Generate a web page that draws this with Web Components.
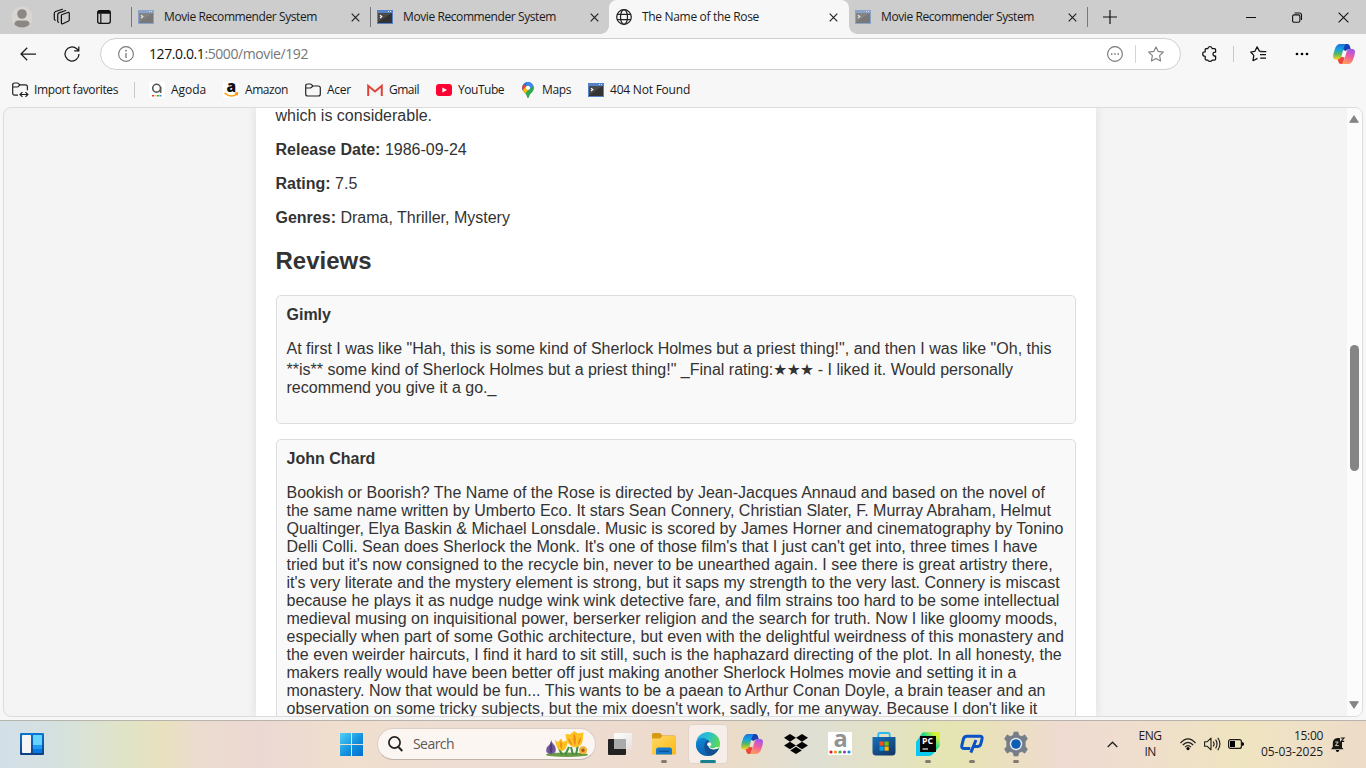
<!DOCTYPE html>
<html lang="en">
<head>
<meta charset="utf-8">
<title>The Name of the Rose</title>
<style>
html,body{margin:0;height:100%;overflow:hidden}
body{width:1366px;height:768px;background:#f7f7f7}
</style>
</head>
<body>
<desktop-screen></desktop-screen>
<script>
const icons = {
avatar:[22,22,'<circle cx="11" cy="11" r="10.6" fill="#d9d5d0"/><circle cx="11" cy="8" r="4.8" fill="#8b8784"/><path d="M3.4 18.3C3.4 15.6 5.2 14.4 7 14.4h8c1.8 0 3.6 1.2 3.6 3.9A10.6 10.6 0 0 1 3.4 18.3z" fill="#8b8784"/>'],
spaces:[18,18,'<g fill="none" stroke="#111" stroke-width="1.2" stroke-linejoin="round" stroke-linecap="round"><path d="M8.6 6.8 14.8 4.5Q16.3 4 16.3 5.6V11.6Q16.3 12.9 15.2 13.3L9.8 15.8Q8.4 16.3 8.4 14.9V7.6Q8.4 7 8.6 6.8z"/><path d="M5.4 14.3Q4.7 14 4.7 13V6.8Q4.7 5.5 6 4.9L12.6 2.5"/><path d="M2.2 12.3Q1.3 11.9 1.3 10.8V5.3Q1.3 4 2.6 3.5L9.4 1.2"/></g>'],
tabact:[16,16,'<rect x="1.7" y="1.7" width="12.6" height="12.6" rx="2" fill="none" stroke="#111" stroke-width="1.3"/><path d="M1.7 2.8Q1.7 1.5 3.2 1.5H12.8Q14.3 1.5 14.3 2.8V4.8H1.7z" fill="#111"/><path d="M4.8 4.5V14" stroke="#111" stroke-width="1.2"/>'],
term:[16,14,'<rect width="16" height="14" fill="#5681c4"/><rect x="1" y="3" width="14" height="10" fill="#333"/><path d="M1 3h14L1 12z" fill="#4a4a4a"/><path d="M11 1.5h1M13 1.5h1" stroke="#d9e7ff"/><path d="M3 5.2 4.8 6.6 3 8" fill="none" stroke="#fff" stroke-width="1.1"/>'],
globe:[16,16,'<g fill="none" stroke="#222" stroke-width="1.25"><circle cx="8" cy="8" r="7.3"/><ellipse cx="8" cy="8" rx="3.5" ry="7.3"/><path d="M1.2 5.4H14.8M1.2 10.6H14.8"/></g>'],
x:[9,9,'<path d="M.7 .7 8.3 8.3M8.3 .7 .7 8.3" stroke="#222" stroke-width="1.2"/>'],
X:[11,11,'<path d="M.6 .6 10.4 10.4M10.4 .6 .6 10.4" stroke="#111" stroke-width="1.1"/>'],
plus:[14,14,'<path d="M7 0V14M0 7H14" stroke="#111" stroke-width="1.2"/>'],
min:[10,10,'<path d="M0 5.5H10" stroke="#111"/>'],
restore:[10,11,'<g fill="none" stroke="#111" stroke-width="1.1"><rect x=".6" y="2.9" width="7.3" height="7.3" rx="1.5"/><path d="M2.6 1H7.6Q9.5 1 9.5 3V8"/></g>'],
back:[16,14,'<path d="M16 7H1M7.2 .8 1 7 7.2 13.2" fill="none" stroke="#1b1b1b" stroke-width="1.25"/>'],
reload:[16,16,'<path d="M15 8A7 7 0 1 1 12.7 2.8L14.6 4.5M14.8 .4V4.9H10.2" fill="none" stroke="#1b1b1b" stroke-width="1.25"/>'],
info:[16,16,'<circle cx="8" cy="8" r="7.4" fill="none" stroke="#777" stroke-width="1.1"/><path d="M8 7V12" stroke="#777" stroke-width="1.3"/><circle cx="8" cy="4.7" r=".9" fill="#777"/>'],
more:[16,16,'<circle cx="8" cy="8" r="7.4" fill="none" stroke="#777" stroke-width="1.1"/><path d="M4 7.3h1.5v1.5H4zM7.2 7.3h1.5v1.5H7.2zM10.5 7.3H12v1.5h-1.5z" fill="#777"/>'],
star:[16,16,'<path d="M8 .9 10.2 5.4 15.3 6.1 11.6 9.6 12.6 15 8 12.4 3.4 15 4.4 9.6 .7 6.1 5.8 5.4z" fill="none" stroke="#808080" stroke-width="1.15" stroke-linejoin="round"/>'],
puzzle:[15,16,'<path d="M3.6 2.7H5.8Q6 .7 8 .7T10.2 2.7H12.5Q13.6 2.7 13.6 3.8V6.2Q11 6 11 8.1T13.6 10V13Q13.6 14.1 12.5 14.1H10.2Q10 15.4 8 15.4T5.8 14.1H4.6Q3.2 14.1 3.2 13V10.3Q.7 10.3 .7 8T3.2 5.8V3.5Q3.2 2.9 3.6 2.7z" fill="none" stroke="#111" stroke-width="1.25" stroke-linejoin="round"/>'],
favs:[17,16,'<path d="M13 5.5 9.4 5.1 7.1 .9 4.9 5.3 .7 6 3.8 9.4 3 14.7 7.5 12.4M10 8.5H16M10 5.5H16.3M10.2 12H16" fill="none" stroke="#111" stroke-width="1.25" stroke-linejoin="round"/>'],
dots:[14,4,'<circle cx="2" cy="2" r="1.35"/><circle cx="7" cy="2" r="1.35"/><circle cx="12" cy="2" r="1.35"/>'],
copilot:[22,20,'<defs><linearGradient id="a" x1="0" y1="0" x2="0" y2="1"><stop stop-color="#1c72e4"/><stop offset=".35" stop-color="#14a3df"/><stop offset=".65" stop-color="#5bb860"/><stop offset="1" stop-color="#ffd21c"/></linearGradient><linearGradient id="b" x1=".6" y1="0" x2=".3" y2="1"><stop stop-color="#a157ef"/><stop offset=".45" stop-color="#ee5ba2"/><stop offset="1" stop-color="#ffa05a"/></linearGradient></defs><path d="M9 0H14.6Q16.1 0 16.7 1.8L17.8 5.2H16Q13.6 5.2 12.9 7L10.2 6z" fill="#1541b5"/><path d="M6.5 0H13.2Q11.7 .7 10.9 3.6L8.5 12Q7.7 15.5 5 15.5H2.6Q.2 15.5 .1 12.8Q0 10.5 1.5 6.2Q3.2 .3 6.5 0z" fill="url(#a)"/><path d="M4.6 15.4Q7.5 15.2 8.3 12.8L11.8 13.5 9.5 20H7.6Q6 20 5.5 18z" fill="#f0473c"/><path d="M15.6 20H8.4Q10.2 19.4 11 16.5L13.5 8Q14.3 5 17 5H19.4Q21.9 5 22 8Q22 10 20.5 14.3Q19 19.6 15.6 20z" fill="url(#b)"/>'],
folder:[16,14,'<path d="M.7 3Q.7 1 2.7 1H5.2Q6 1 6.5 1.6L7.8 3H13.3Q15.3 3 15.3 5V11Q15.3 13 13.3 13H2.7Q.7 13 .7 11zM1 5H5.2Q6 5 6.5 4.4L7.8 3" fill="none" stroke="#222" stroke-width="1.2"/>'],
importf:[17,16,'<path d="M6 13.2H2.7Q.7 13.2 .7 11.2V3Q.7 1 2.7 1H5.2Q6 1 6.5 1.6L7.8 2.8H13.3Q15.4 2.8 15.4 4.8V8.3M1 5H5.2Q6 5 6.5 4.4L7.8 2.8" fill="none" stroke="#222" stroke-width="1.2"/><path d="M8.2 12.5H15.5M10.4 10.1 8 12.5 10.4 14.9M13.5 10.1 15.9 12.5 13.5 14.9" fill="none" stroke="#222" stroke-width="1.2"/>'],
agoda:[16,16,'<rect width="16" height="16" rx="1" fill="#fff"/><circle cx="7.6" cy="6.2" r="3.9" fill="none" stroke="#555" stroke-width="1.6"/><path d="M11.7 5V11" stroke="#555" stroke-width="1.5"/><path d="M3 13.7h2" stroke="#e33" stroke-width="1.6"/><path d="M5.5 13.7h2" stroke="#fb3" stroke-width="1.6"/><path d="M8 13.7h2" stroke="#3a5" stroke-width="1.6"/><path d="M10.5 13.7h2" stroke="#38d" stroke-width="1.6"/>'],
amazon:[16,16,'<rect width="16" height="16" rx="1" fill="#fff"/><text x="3.4" y="10.2" font-family="Open Sans" font-weight="800" font-size="15.5" fill="#111">a</text><path d="M1.5 11Q8 16.5 13.8 12M11.8 11.2 14.5 10.8 13.9 13.5" fill="none" stroke="#f90" stroke-width="1.5"/>'],
gmail:[16,12,'<path d="M1 1H15V11H1z" fill="#f4f2f2"/><path d="M1.2 12V1.8L8 7.4 14.8 1.8V12" fill="none" stroke="#db4437" stroke-width="2"/>'],
youtube:[16,12,'<rect width="16" height="12" rx="3" fill="#ff0033"/><path d="M6.3 3.4 11 6 6.3 8.6z" fill="#fff"/>'],
maps:[12,16,'<defs><clipPath id="p"><path d="M6 0A5.8 5.8 0 0 1 11.8 5.8C11.8 10 7.8 10.8 6.7 15.2Q6 16.8 5.3 15.2C4.2 10.8 .2 10 .2 5.8A5.8 5.8 0 0 1 6 0z"/></clipPath></defs><g clip-path="url(#p)"><path d="M0 0H12V16H0z" fill="#34a853"/><path d="M0 0H9L0 10z" fill="#1a73e8"/><path d="M-1 3 1.5 2 5 5-1 12z" fill="#ea4335"/><path d="M12 1 2 13-1 10 5 3.5z" fill="#fbbc04"/><path d="M5 0H9.5L12 3 8 7 4 3z" fill="#4285f4"/><path d="M12 3 5 11 4.5 16H12z" fill="#34a853"/></g><circle cx="6" cy="5.8" r="2.1" fill="#fff"/>'],
widgets:[24,22,'<defs><linearGradient id="w" x2="0" y2="1"><stop stop-color="#0878d0"/><stop offset="1" stop-color="#103e86"/></linearGradient></defs><rect width="24" height="22" rx="1" fill="url(#w)"/><rect x="2" y="2" width="9" height="18" rx=".7" fill="#f5f5f5"/><rect x="13" y="2" width="9" height="10" fill="#64d4ff"/><rect x="13" y="12" width="9" height="4" fill="#1d9bf5"/><rect x="13" y="16" width="9" height="4" fill="#0878e0"/>'],
start:[23,23,'<defs><linearGradient id="s" x2="23" y2="23" gradientUnits="userSpaceOnUse"><stop stop-color="#51d0fb"/><stop offset=".55" stop-color="#1391dd"/><stop offset="1" stop-color="#0070d0"/></linearGradient></defs><path d="M0 .5Q0 0 .5 0H11V11H0zM12 0H22.5Q23 0 23 .5V11H12zM0 12H11V23H.5Q0 23 0 22.5zM12 12H23V22.5Q23 23 22.5 23H12z" fill="url(#s)"/>'],
search:[15,16,'<circle cx="6.5" cy="6.5" r="5.6" fill="none" stroke="#222" stroke-width="1.7"/><path d="M10.5 11 14.3 15" stroke="#222" stroke-width="1.9"/>'],
flowers:[44,26,'<ellipse cx="22" cy="23.7" rx="21" ry="2.3" fill="#6d9a46"/><path d="M17 24 13 15M31 24 33 13M20 24 24 16M28 24 26 16M36 24 39 16" stroke="#3f8f3e" stroke-width="2"/><path d="M6 9Q7 12 10 15Q13 22 6 23Q-1 23 2 16Q6 13 6 9z" fill="#72579a"/><path d="M6 11Q9 18 6 23Q3 18 6 11z" fill="#4f3b78"/><path d="M10 9 13 11 16 7.5 18 11 22.5 9Q23 18 17 20Q11 19 10 9z" fill="#fbc11f"/><path d="M16 9Q18 14 16.5 19Q14 14 16 9z" fill="#f28c16"/><path d="M20.5 3 25 3.6 29 0 33 2.4 38.5 1.5 38 7Q38 15.5 30 16.5Q21 15 20.5 3z" fill="#fcc422"/><path d="M29.3 2Q32 8 30 15Q27 8 29.3 2zM23 7Q26 9 27.5 14.5Q23.5 12 23 7zM36 6Q36 11 33 14Q33 9 36 6z" fill="#f0861a"/><circle cx="38" cy="19.3" r="4" fill="#f0b338"/><circle cx="38" cy="19.3" r="1.7" fill="#a75b1b"/>'],
taskview:[24,22,'<defs><linearGradient id="t" x2="1" y2="1"><stop stop-color="#fff"/><stop offset="1" stop-color="#e4e2e0"/></linearGradient></defs><rect x="6" width="18" height="16" rx="1" fill="url(#t)"/><rect y="6" width="18" height="16" rx="1" fill="#222"/><rect x="6" y="6" width="12" height="10" fill="#aaa"/>'],
explorer:[24,22,'<defs><linearGradient id="e" x2="1" y2="1"><stop stop-color="#ffd867"/><stop offset="1" stop-color="#fcb813"/></linearGradient></defs><path d="M0 1.5Q0 0 1.5 0H8L10.5 2.5H22Q24 2.5 24 4V8H0z" fill="#d99a13"/><path d="M0 5.5H8L10.5 3H23Q24 3 24 4V20.5Q24 21.5 23 21.5H1Q0 21.5 0 20.5z" fill="url(#e)"/><path d="M4 21.5V17Q4 14.5 6.5 14.5H17.5Q20 14.5 20 17V21.5z" fill="#1678ca"/><path d="M7 18.3H17" stroke="#07559f" stroke-width="1.4"/>'],
edge:[24,24,'<defs><linearGradient id="g" x1="0" x2="1" y2=".4"><stop stop-color="#23a7e2"/><stop offset=".5" stop-color="#29c1ce"/><stop offset="1" stop-color="#5fda52"/></linearGradient><linearGradient id="h" x2=".5" y2="1"><stop stop-color="#128dd6"/><stop offset="1" stop-color="#0d5aad"/></linearGradient></defs><circle cx="12" cy="12" r="12" fill="url(#g)"/><path d="M0 12C1 5.5 8 5 11 7.5C14.2 9.5 13.4 12 12.8 13.1C12 15 13.5 17.2 17 17.4C20 17.6 22 16.3 22.7 16.6C20 22 16 24 12 24C4 24-.6 17.5 0 12z" fill="url(#h)"/><path d="M8.4 13.5C8.8 9.5 11 8.2 12.2 8.5C14.5 10 13.3 12 12.8 13.1C12 15 13.5 17.2 17 17.4C20 17.6 22 16.3 22.7 16.6C21.2 20 18 23.5 14.5 23.4C10 22.7 8 18 8.4 13.5z" fill="#164f91"/><path d="M12.8 13.1C11.9 15.2 14 17.4 17.5 17.4Q21 17.4 23.5 15.2L20 15Q18 17 14.5 15.7Q12.6 14.8 13.5 12z" fill="#fff5ee"/><circle cx="13.2" cy="12.3" r="2.1" fill="#fff5ee"/>'],
dropbox:[24,20,'<path d="M6 0 12 3.8 6 7.7 0 3.8zM18 0 24 3.8 18 7.7 12 3.8zM6 7.7 12 11.5 6 15.3 0 11.5zM18 7.7 24 11.5 18 15.3 12 11.5zM12 12.7 17.8 16.4 12 20 6.2 16.4z" fill="#050505"/>'],
alexa:[24,24,'<rect width="24" height="23" fill="#fff"/><text x="5.4" y="15.3" font-family="Open Sans" font-weight="700" font-size="23.5" fill="#929292">a</text><circle cx="3" cy="20" r="1.6" fill="#e8131c"/><circle cx="7.5" cy="20" r="1.6" fill="#f6921e"/><circle cx="12" cy="20" r="1.6" fill="#39a94a"/><circle cx="16.5" cy="20" r="1.6" fill="#8d3fc8"/><circle cx="21" cy="20" r="1.6" fill="#1b82d8"/>'],
store:[24,24,'<defs><linearGradient id="m" x2=".7" y2="1"><stop stop-color="#1672be"/><stop offset="1" stop-color="#133a6b"/></linearGradient></defs><path d="M6.3 6V2.3Q6.3 1 7.8 1H16.2Q17.7 1 17.7 2.3V6" fill="none" stroke="#2cb8f2" stroke-width="1.8"/><path d="M.5 5H23.5V20Q23.5 23.5 20 23.5H4Q.5 23.5 .5 20z" fill="url(#m)"/><path d="M7.5 9.5h4.2v4.2H7.5z" fill="#f25022"/><path d="M12.5 9.5h4.2v4.2h-4.2z" fill="#7fba00"/><path d="M7.5 14.5h4.2v4.2H7.5z" fill="#00a4ef"/><path d="M12.5 14.5h4.2v4.2h-4.2z" fill="#ffb900"/>'],
pycharm:[24,24,'<defs><linearGradient id="c" x1="0" y1="1" x2="1" y2="0"><stop stop-color="#08c6ff"/><stop offset=".45" stop-color="#0bcddd"/><stop offset=".6" stop-color="#21d789"/><stop offset=".85" stop-color="#d8f13a"/></linearGradient></defs><path d="M6 1Q7 0 9 0H24V14L17 22Q15.5 24 13 24H0V10z" fill="url(#c)"/><rect x="4" y="4" width="16" height="16" fill="#050505"/><text x="6" y="12.2" font-family="Open Sans" font-weight="700" font-size="8" fill="#fff" textLength="11" lengthAdjust="spacingAndGlyphs">PC</text><path d="M6.5 17H12" stroke="#fff" stroke-width="1.1"/>'],
pd:[24,20,'<g fill="none" stroke="#0b52c9" stroke-width="3" stroke-linejoin="round"><path d="M10.3 14.4H4.2Q1.2 14.4 1.8 11.7L3.4 5.2Q4.1 2.2 7 2.2H19.8Q22.8 2.2 22 5.2L20.8 9.8Q20.1 12.5 17.4 12.5H14"/><path d="M16 6 10.8 18.6"/></g>'],
settings:[24,24,'<path d="M10 0H14L15 3.4 17.8 4.6 20.8 2.8 23.5 6.8 21.3 9.5V14.5L23.5 17.2 20.8 21.2 17.8 19.4 15 20.6 14 24H10L9 20.6 6.2 19.4 3.2 21.2 .5 17.2 2.7 14.5V9.5L.5 6.8 3.2 2.8 6.2 4.6 9 3.4z" fill="#747d88" stroke="#747d88" stroke-linejoin="round" stroke-width=".6"/><circle cx="12" cy="12" r="6.2" fill="#eceef0"/><circle cx="12" cy="12" r="4.8" fill="#0c5fb3"/>'],
chev:[11,7,'<path d="M.7 6 5.5 1.2 10.3 6" fill="none" stroke="#222" stroke-width="1.3"/>'],
wifi:[16,13,'<g fill="none" stroke="#1b1b1b" stroke-width="1.15"><path d="M.5 5Q8-3.2 15.5 5M2.8 7Q8 1.6 13.2 7M5 9.1Q8 6 11 9.1"/></g><circle cx="8" cy="10.6" r="1.6"/>'],
sound:[17,14,'<g fill="none" stroke="#1b1b1b" stroke-width="1.1" stroke-linejoin="round"><path d="M.6 4.7H3.3L7 1.2V12.8L3.3 9.3H.6z"/><path d="M9.2 4.5Q11 7 9.2 9.5M11.6 2.6Q14.4 7 11.6 11.4M13.8 .8Q18 7 13.8 13.2"/></g>'],
battery:[16,10,'<rect x=".6" y=".6" width="12.8" height="8.8" rx="2" fill="none" stroke="#1b1b1b" stroke-width="1.2"/><path d="M2 2H7V8H2zM14 3.2H15Q16 3.6 16 5T15 6.8H14z"/>'],
bell:[14,15,'<path d="M1.8 10V6Q2 1.5 6.5 1Q8 .8 9 1.3V5H11V10.5L12.6 12.3H0z" fill="#161616"/><path d="M4.6 13H8.4Q7.8 15 6.5 15T4.6 13z"/><path d="M9.7 1H13L10 4.4H13.2" fill="none" stroke="#161616" stroke-width="1.1"/><path d="M4.3 5H7.2L4.4 8.6H7.7" fill="none" stroke="#eee3c8" stroke-width=".9"/>'],
up:[10,8,'<path d="M5 .7 9.3 7.3H.7z" fill="#858585" stroke="#858585" stroke-linejoin="round"/>'],
down:[10,8,'<path d="M5 7.3 .7 .7H9.3z" fill="#858585" stroke="#858585" stroke-linejoin="round"/>']
};

function define(name, css, html) {
  customElements.define(name, class extends HTMLElement {
    connectedCallback() {
      if (this.shadowRoot) return;
      this.attachShadow({mode: 'open'}).innerHTML = '<style>*{box-sizing:border-box}:host{box-sizing:border-box}' + css + '</style>' +
        (typeof html === 'function' ? html(this) : html);
    }
  });
}
const a = (el, n, d = '') => el.getAttribute(n) ?? d;

define('ui-icon', ':host{display:block;flex:none}svg{display:block;overflow:visible}', el => {
  const [w, h, body] = icons[a(el, 'name')];
  return `<svg width="${w}" height="${h}" viewBox="0 0 ${w} ${h}">${body}</svg>`;
});

/* Box of a fixed width that centres its content. */
define('icon-cell', ':host{display:flex;flex:none;align-items:center;justify-content:center;height:100%}', el =>
  `<style>:host{width:${a(el, 'w', 40)}px}</style><slot></slot>`);

define('v-rule', ':host{display:block;flex:none;width:1px}', el =>
  `<style>:host{height:${a(el, 'h', 20)}px;background:${a(el, 'c', '#777')}}</style>`);

define('browser-tab', `
:host{display:flex;position:relative;align-items:center;width:239px;height:34px;flex:none;padding:0 11px 0 6px;color:#1a1a1a}
:host([active]){background:#f7f7f7;border-radius:8px 8px 0 0;width:240px;padding-left:7px}
:host([active])::before,:host([active])::after{content:"";position:absolute;bottom:0;width:8px;height:8px}
:host([active])::before{left:-8px;background:radial-gradient(circle at 0 0,transparent 7.5px,#f7f7f7 8px)}
:host([active])::after{right:-8px;background:radial-gradient(circle at 100% 0,transparent 7.5px,#f7f7f7 8px)}
.label{flex:1;margin-left:10px}
:host([dim]) .fav{opacity:.55}`, el =>
  `<ui-icon class="fav" name="${a(el, 'icon', 'term')}"></ui-icon><span class="label"><fit-text w="${a(el, 'w')}">${a(el, 'label')}</fit-text></span><ui-icon name="x"></ui-icon>`);

define('tab-strip', `
:host{display:flex;align-items:center;height:34px;background:#cdcdcd;font:12px/16px "Open Sans",sans-serif}
.sp{flex:1}`, `
<icon-cell w="44"><ui-icon name="avatar"></ui-icon></icon-cell>
<icon-cell w="36"><ui-icon name="spaces"></ui-icon></icon-cell>
<icon-cell w="48"><ui-icon name="tabact"></ui-icon></icon-cell>
<icon-cell w="3"></icon-cell><v-rule></v-rule>
<browser-tab dim label="Movie Recommender System" w="153"></browser-tab><v-rule style="margin-left:-1px"></v-rule>
<browser-tab label="Movie Recommender System" w="153" style="width:238px;padding-right:10px"></browser-tab>
<browser-tab active icon="globe" label="The Name of the Rose" w="117"></browser-tab>
<browser-tab dim label="Movie Recommender System" w="153"></browser-tab><v-rule style="margin-left:-1px"></v-rule>
<icon-cell w="43"><ui-icon name="plus"></ui-icon></icon-cell>
<span class="sp"></span>
<icon-cell w="46"><ui-icon name="min"></ui-icon></icon-cell>
<icon-cell w="46"><ui-icon name="restore"></ui-icon></icon-cell>
<icon-cell w="46"><ui-icon name="X"></ui-icon></icon-cell>`);

define('address-bar', `
:host{display:flex;align-items:center;width:1081px;height:32px;flex:none;background:#fff;border:1px solid #cfcfcf;border-radius:16px;padding-left:5px;font:14px/20px "Open Sans",sans-serif;color:#767676}
b{font-weight:400;color:#111}
.u{flex:1;margin-left:3px;padding-bottom:1px}`, `
<icon-cell w="40"><ui-icon name="info"></ui-icon></icon-cell>
<span class="u"><fit-text w="159"><b>127.0.0.1</b>:5000/movie/192</fit-text></span>
<icon-cell w="41"><ui-icon name="more"></ui-icon></icon-cell><v-rule h="18" c="#d5d5d5"></v-rule>
<icon-cell w="40"><ui-icon name="star"></ui-icon></icon-cell><icon-cell w="4"></icon-cell>`);

define('tool-bar', ':host{display:flex;align-items:center;height:40px;background:#f7f7f7}', `
<icon-cell w="6"></icon-cell><icon-cell w="44"><ui-icon name="back"></ui-icon></icon-cell>
<icon-cell w="44"><ui-icon name="reload"></ui-icon></icon-cell><icon-cell w="6"></icon-cell>
<address-bar></address-bar>
<icon-cell w="5"></icon-cell><icon-cell w="47"><ui-icon name="puzzle"></ui-icon></icon-cell>
<v-rule h="16" c="#c8c8c8"></v-rule>
<icon-cell w="48"><ui-icon name="favs"></ui-icon></icon-cell>
<icon-cell w="40"><ui-icon name="dots"></ui-icon></icon-cell>
<icon-cell w="44"><ui-icon name="copilot"></ui-icon></icon-cell>`);

define('fav-link', ':host{display:flex;align-items:center;flex:none}', el =>
  `<ui-icon name="${a(el, 'icon')}"></ui-icon><span style="margin-left:${a(el, 'gap', 6)}px"><fit-text w="${a(el, 'w')}"><slot></slot></fit-text></span>`);

define('favourites-bar', ':host{display:flex;align-items:center;height:32px;padding-left:12px;background:#f7f7f7;color:#1a1a1a;font:12px/16px "Open Sans",sans-serif}', `
<fav-link icon="importf" w="84" gap="5">Import favorites</fav-link>
<v-rule h="16" c="#c8c8c8" style="margin:0 14px 0 16px"></v-rule>
<fav-link icon="agoda" w="35">Agoda</fav-link>
<fav-link icon="amazon" w="43" style="margin-left:17px">Amazon</fav-link>
<fav-link icon="folder" w="24" style="margin-left:17px">Acer</fav-link>
<fav-link icon="gmail" w="30" style="margin-left:16px">Gmail</fav-link>
<fav-link icon="youtube" w="46" style="margin-left:17px">YouTube</fav-link>
<fav-link icon="maps" w="29" gap="8" style="margin-left:18px">Maps</fav-link>
<fav-link icon="term" w="80" style="margin-left:17px">404 Not Found</fav-link>`);

const lines = s => s.trim().split('\n').map(l => `<div class="l">${l}</div>`).join('');

define('review-card', `
:host{display:block;border:1px solid #ddd;border-radius:5px;background:#f9f9f9;padding:10px;margin-bottom:15px}
strong{display:block;height:18px}
.body{margin:16px 0}`, el => `<strong>${a(el, 'author')}</strong><div class="body"><slot></slot></div>`);

define('movie-details', `
:host{display:block;width:840px;height:100%;overflow:hidden;margin:0 auto;padding:0 20px;background:#fff;box-shadow:0 0 10px rgba(0,0,0,.1);font:16px/18px "Liberation Sans",Arial,sans-serif;color:#333}
p{margin:0 0 16px}
h2{font-size:24px;line-height:28px;margin:20px 0 20px}
.l{white-space:nowrap;height:18px}
.tall{height:21px;padding-top:3px}`, `
<p style="margin-top:-1px">which is considerable.</p>
<p><b>Release Date:</b> 1986-09-24</p>
<p><b>Rating:</b> 7.5</p>
<p><b>Genres:</b> Drama, Thriller, Mystery</p>
<h2>Reviews</h2>
<review-card author="Gimly">
<div class="l">At first I was like "Hah, this is some kind of Sherlock Holmes but a priest thing!", and then I was like "Oh, this</div>
<div class="l tall">**is** some kind of Sherlock Holmes but a priest thing!" _Final rating:<ui-stars></ui-stars> - I liked it. Would personally</div>
<div class="l">recommend you give it a go._</div>
</review-card>
<review-card author="John Chard">${lines(`
Bookish or Boorish? The Name of the Rose is directed by Jean-Jacques Annaud and based on the novel of
the same name written by Umberto Eco. It stars Sean Connery, Christian Slater, F. Murray Abraham, Helmut
Qualtinger, Elya Baskin &amp; Michael Lonsdale. Music is scored by James Horner and cinematography by Tonino
Delli Colli. Sean does Sherlock the Monk. It's one of those film's that I just can't get into, three times I have
tried but it's now consigned to the recycle bin, never to be unearthed again. I see there is great artistry there,
it's very literate and the mystery element is strong, but it saps my strength to the very last. Connery is miscast
because he plays it as nudge nudge wink wink detective fare, and film strains too hard to be some intellectual
medieval musing on inquisitional power, berserker religion and the search for truth. Now I like gloomy moods,
especially when part of some Gothic architecture, but even with the delightful weirdness of this monastery and
the even weirder haircuts, I find it hard to sit still, such is the haphazard directing of the plot. In all honesty, the
makers really would have been better off just making another Sherlock Holmes movie and setting it in a
monastery. Now that would be fun... This wants to be a paean to Arthur Conan Doyle, a brain teaser and an
observation on some tricky subjects, but the mix doesn't work, sadly, for me anyway. Because I don't like it`)}
</review-card>`);

define('ui-stars', ':host{display:inline-block;width:40px;height:18px;vertical-align:top;white-space:nowrap;font:15.5px/18px "DejaVu Sans",sans-serif}', '<fit-text w="40">★★★</fit-text>');

define('scroll-bar', `
:host{display:flex;flex-direction:column;align-items:center;justify-content:space-between;flex:none;width:15px;background:#fcfcfc;padding:7px 0}
ui-icon{margin-left:-1px}
.track{flex:1;width:9px;padding-top:222px}
.thumb{height:126px;border-radius:5px;background:#858585}`,
'<ui-icon name="up"></ui-icon><div class="track"><div class="thumb"></div></div><ui-icon name="down"></ui-icon>');

define('page-frame', ':host{display:flex;height:610px;width:1360px;margin:1px 0 0 3px;border:1px solid #dcdcdc;border-radius:8px;overflow:hidden;background:#f4f4f4}.m{flex:1;min-width:0;overflow:hidden}',
'<div class="m"><movie-details></movie-details></div><scroll-bar></scroll-bar>');

define('task-app', `
:host{display:grid;place-items:center;position:relative;width:44px;height:46px;flex:none}
:host([active])::before{content:"";position:absolute;left:3px;top:4px;width:38px;height:38px;border-radius:4px;background:#f7eee9;box-shadow:0 0 0 .7px #ddd0c8}
ui-icon{position:relative}
:host([run])::after,:host([active])::after{content:"";position:absolute;bottom:4px;left:19px;width:6px;height:3px;border-radius:2px;background:#837970}
:host([active])::after{left:14px;width:16px;background:#18808f}`, el => `<ui-icon name="${a(el, 'icon')}"></ui-icon>`);

define('search-pill', `
:host{display:flex;align-items:center;width:219px;height:32px;flex:none;background:#fbf6f2;border:1px solid #dccfc6;border-bottom-color:#c2b3a9;border-radius:16px;padding:0 6px 0 10px;color:#5d5957;font:14px/20px "Open Sans",sans-serif}
.t{flex:1;margin-left:10px}`, '<ui-icon name="search"></ui-icon><span class="t"><fit-text w="41">Search</fit-text></span><ui-icon name="flowers"></ui-icon>');

define('task-bar', `
:host{display:flex;align-items:center;height:48px;border-top:1px solid #b7b4ae;margin-top:3px;padding-bottom:1px;font:12px/16px "Open Sans",sans-serif;color:#1b1b1b;
background:linear-gradient(90deg,#d3dfe7 0,#d5e1de 60px,#e0e4c8 120px,#e9e1bf 165px,#ecdccf 195px,#ecd8d3 260px,#f0dfcd 350px,#edddd3 440px,#eddbcd 700px,#e9dcc8 745px,#dfdfd4 810px,#e2e1c8 870px,#e5e5b2 950px,#eae0bd 1000px,#efdbd1 1060px,#efddcf 1120px,#efe4c0 1240px,#efe1c7 1300px,#eddbc7 1366px)}
.c{text-align:center;width:44px}.r{text-align:right;width:75px}.sp{flex:1}`, `
<icon-cell w="64"><ui-icon name="widgets"></ui-icon></icon-cell>
<icon-cell w="265"></icon-cell>
<task-app icon="start"></task-app><icon-cell w="4"></icon-cell>
<search-pill></search-pill><icon-cell w="2"></icon-cell>
<task-app icon="taskview"></task-app><task-app icon="explorer" run></task-app><task-app icon="edge" active></task-app>
<task-app icon="copilot"></task-app><task-app icon="dropbox"></task-app><task-app icon="alexa"></task-app>
<task-app icon="store"></task-app><task-app icon="pycharm" run></task-app><task-app icon="pd" run></task-app><task-app icon="settings" run></task-app>
<span class="sp"></span>
<icon-cell w="32"><ui-icon name="chev"></ui-icon></icon-cell>
<div class="c"><fit-text w="23">ENG</fit-text><br><fit-text w="11">IN</fit-text></div>
<icon-cell w="4"></icon-cell>
<icon-cell w="24"><ui-icon name="wifi"></ui-icon></icon-cell><icon-cell w="24"><ui-icon name="sound"></ui-icon></icon-cell><icon-cell w="24"><ui-icon name="battery"></ui-icon></icon-cell>
<div class="r"><fit-text w="29">15:00</fit-text><br><fit-text w="62">05-03-2025</fit-text></div>
<icon-cell w="30"><ui-icon name="bell"></ui-icon></icon-cell><icon-cell w="13"></icon-cell>`);

define('desktop-screen', ':host{display:flex;flex-direction:column;width:1366px;height:768px;overflow:hidden;background:#f7f7f7}tab-strip,tool-bar,favourites-bar,page-frame,task-bar{flex:none}',
'<tab-strip></tab-strip><tool-bar></tool-bar><favourites-bar></favourites-bar><page-frame></page-frame><task-bar></task-bar>');

/* One line of text whose tracking is set so that it fills the width in "w". */
customElements.define('fit-text', class extends HTMLElement {
  connectedCallback() {
    if (this.shadowRoot) return;
    this.attachShadow({mode: 'open'}).innerHTML = '<style>:host{display:inline-block;white-space:nowrap}</style><slot></slot>';
    const slot = this.querySelector('slot');
    const text = slot ? slot.assignedNodes().map(n => n.textContent).join('') : this.textContent;
    const d = (+this.getAttribute('w') - this.getBoundingClientRect().width) / text.trim().length;
    this.style.letterSpacing = d.toFixed(3) + 'px';
  }
});
</script>
</body>
</html>
